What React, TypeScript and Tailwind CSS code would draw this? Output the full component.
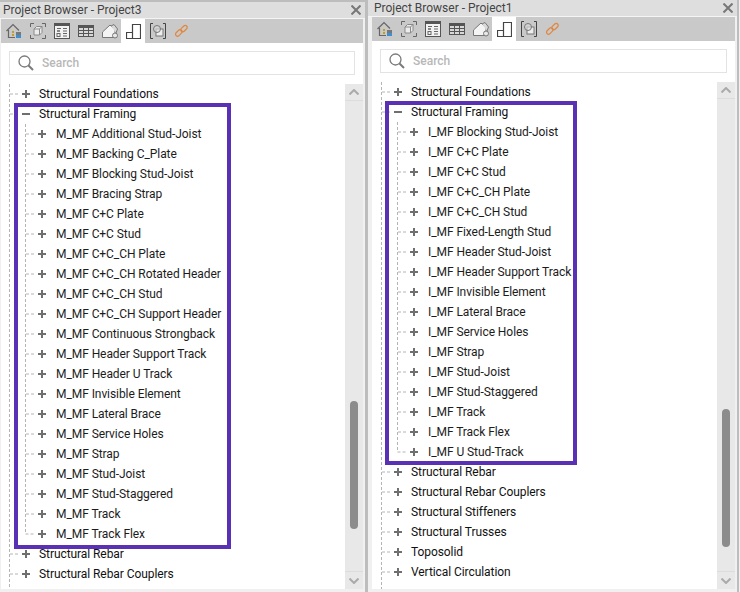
import { ReactNode } from "react";

const font = "font-['Roboto','Noto_Sans',sans-serif]";

const leftKids = [
  "M_MF Additional Stud-Joist", "M_MF Backing C_Plate", "M_MF Blocking Stud-Joist", "M_MF Bracing Strap",
  "M_MF C+C Plate", "M_MF C+C Stud", "M_MF C+C_CH Plate", "M_MF C+C_CH Rotated Header", "M_MF C+C_CH Stud",
  "M_MF C+C_CH Support Header", "M_MF Continuous Strongback", "M_MF Header Support Track", "M_MF Header U Track",
  "M_MF Invisible Element", "M_MF Lateral Brace", "M_MF Service Holes", "M_MF Strap", "M_MF Stud-Joist",
  "M_MF Stud-Staggered", "M_MF Track", "M_MF Track Flex",
];

const rightKids = [
  "I_MF Blocking Stud-Joist", "I_MF C+C Plate", "I_MF C+C Stud", "I_MF C+C_CH Plate", "I_MF C+C_CH Stud",
  "I_MF Fixed-Length Stud", "I_MF Header Stud-Joist", "I_MF Header Support Track", "I_MF Invisible Element",
  "I_MF Lateral Brace", "I_MF Service Holes", "I_MF Strap", "I_MF Stud-Joist", "I_MF Stud-Staggered",
  "I_MF Track", "I_MF Track Flex", "I_MF U Stud-Track",
];

const dash = { stroke: "#b4b4b4", strokeDasharray: "3 2" };

function TopRow({ label, open }: { label: string; open?: boolean }) {
  return (
    <div className="flex h-5 items-center">
      <svg width="38" height="20" className="shrink-0">
        <path d="M8.5 0V20M9 10H17" fill="none" {...dash} />
        <path d="M21 10H29" stroke="#6f6f6f" strokeWidth="2" />
        {!open && <path d="M25 6V14" stroke="#6f6f6f" strokeWidth="2" />}
      </svg>
      <span className="whitespace-nowrap">{label}</span>
    </div>
  );
}

function KidRow({ label, last }: { label: string; last?: boolean }) {
  return (
    <div className="flex h-5 items-center">
      <svg width="55" height="20" className="shrink-0">
        <path d="M8.5 0V20" fill="none" {...dash} />
        <path d={last ? "M24.5 0V10H33" : "M24.5 0V20M25 10H33"} fill="none" {...dash} />
        <path d="M37 10H45M41 6V14" stroke="#6f6f6f" strokeWidth="2" />
      </svg>
      <span className="whitespace-nowrap text-[#1c1c1c]">{label}</span>
    </div>
  );
}

function Scrollbar({ thumb, before }: { thumb: string; before: string }) {
  return (
    <div className="flex w-[18px] shrink-0 flex-col bg-[#e8e8e8]">
      <div className="flex h-[17px] shrink-0 items-center justify-center border-b border-[#dcdcdc]">
        <svg width="10" height="6" viewBox="0 0 10 6"><path d="M0.5 5.5L5 1L9.5 5.5" fill="none" stroke="#aaa" strokeWidth="2" /></svg>
      </div>
      <div className={`${before} shrink-0`} />
      <div className={`${thumb} mx-auto w-2 shrink-0 rounded bg-[#8c8c8c]`} />
      <div className="grow" />
      <div className="flex h-[18px] shrink-0 items-center justify-center border-t border-[#dcdcdc]">
        <svg width="10" height="6" viewBox="0 0 10 6"><path d="M0.5 0.5L5 5L9.5 0.5" fill="none" stroke="#aaa" strokeWidth="2" /></svg>
      </div>
    </div>
  );
}

const icons: ReactNode[] = [
  <svg key="home" width="16" height="16" viewBox="0 0 16 16" fill="none">
    <path d="M0.5 8L7 1.5L13 7.5M2.5 7V14.5H9" stroke="#666" strokeWidth="1.2" />
    <rect x="6" y="8" width="2" height="2" fill="#c79a2b" />
    <rect x="6" y="11" width="2" height="2" fill="#c79a2b" />
    <rect x="10" y="9" width="5" height="3" fill="#777" />
    <rect x="10" y="12" width="5" height="3" fill="#3d8fd1" />
  </svg>,
  <svg key="box" width="16" height="16" viewBox="0 0 16 16" fill="none">
    <path d="M0.5 4V0.5H4M12 0.5H15.5V4M15.5 12V15.5H12M4 15.5H0.5V12" stroke="#666" />
    <path d="M4 6L6.5 3.5H12V9.5L9.5 12H4ZM4 6H9.5V12M9.5 6L12 3.5" fill="#ececec" stroke="#8a8a8a" />
  </svg>,
  <svg key="sheet" width="16" height="16" viewBox="0 0 16 16" fill="none">
    <rect x="0.5" y="0.5" width="15" height="15" fill="#f2f2f2" stroke="#555" />
    <rect x="1" y="1" width="14" height="2" fill="#555" />
    <path d="M3 5.5H7M9 5.5H13M9 8H13M9 10.5H13M9 13H13" stroke="#666" />
    <rect x="3" y="10.5" width="3" height="3" stroke="#666" />
    <rect x="3" y="7" width="3" height="2" fill="#888" />
  </svg>,
  <svg key="table" width="16" height="12" viewBox="0 0 16 12" fill="none">
    <rect x="0.5" y="0.5" width="15" height="11" fill="#d8d8d8" stroke="#555" />
    <rect x="1" y="1" width="14" height="2" fill="#555" />
    <path d="M1 5.5H15M1 8.5H15M5.5 3V11M10.5 3V11" stroke="#555" />
  </svg>,
  <svg key="tag" width="16" height="15" viewBox="0 0 16 15" fill="none">
    <path d="M0.5 13.5V8L8 1L13 6V13.5Z" fill="#f4f4f4" stroke="#777" />
    <path d="M9 2L12 0.5L15.5 5L14 9" fill="#d9d9d9" stroke="#777" />
    <circle cx="13" cy="11.5" r="2.5" fill="#e8e8e8" stroke="#777" />
  </svg>,
  <svg key="plan" width="15" height="15" viewBox="0 0 15 15" fill="none">
    <path d="M0.5 14.5V8.5H6.5V14.5ZM6.5 8.5V0.5H14.5V14.5H6.5" stroke="#444" strokeWidth="1.2" />
  </svg>,
  <svg key="bracket" width="16" height="16" viewBox="0 0 16 16" fill="none">
    <path d="M3 0.5H0.5V15.5H3M13 0.5H15.5V15.5H13" stroke="#444" />
    <rect x="6" y="6" width="7" height="7" fill="#eee" stroke="#777" />
    <circle cx="7" cy="6" r="3.5" fill="#ddd" fillOpacity="0.6" stroke="#777" />
  </svg>,
  <svg key="link" width="15" height="14" viewBox="0 0 15 14" fill="none" stroke="#e0873f" strokeWidth="1.2">
    <rect x="-3.2" y="-2" width="7.5" height="4" rx="2" transform="translate(4.4 9.3) rotate(-45)" />
    <rect x="-4.2" y="-2" width="7.5" height="4" rx="2" transform="translate(10.3 4.3) rotate(-45)" />
  </svg>,
];

function Panel(props: {
  title: string;
  width: string;
  topGap: string;
  titleInset: string;
  inset: string;
  treeInset: string;
  box: string;
  thumb: string;
  before: string;
  kids: string[];
  tail: string[];
}) {
  return (
    <div className={`${props.width} flex shrink-0 flex-col bg-[#f0f0f0]`}>
      <div className={`${props.topGap} shrink-0 bg-[#bdbdbd]`} />
      <div className="flex h-[16px] shrink-0 items-center justify-between bg-[#dedede] text-[12px] text-[#444]">
        <span className={`${props.titleInset} whitespace-nowrap`}>{props.title}</span>
        <svg width="10" height="10" viewBox="0 0 10 10" className="mr-[4px]">
          <path d="M0.5 0.5L9.5 9.5M9.5 0.5L0.5 9.5" stroke="#777" strokeWidth="2" />
        </svg>
      </div>
      <div className="h-px shrink-0 bg-[#f4f4f4]" />
      <div className={`${props.inset} mr-[2px] mb-[3px] flex min-h-0 grow flex-col`}>
        <div className="flex h-[24px] shrink-0 items-stretch bg-[#c9c9c9]">
          {icons.map((icon, i) => (
            <div key={i} className={`flex w-6 items-center justify-center pl-px ${i === 5 ? "bg-white" : ""}`}>
              {icon}
            </div>
          ))}
        </div>
        <div className="flex min-h-0 grow flex-col bg-white">
          <div className="mx-[8px] mt-[8px] flex h-[24px] shrink-0 items-center border border-[#e3e3e3] bg-white pl-[8px]">
            <svg width="16" height="16" viewBox="0 0 16 16" fill="none" stroke="#7a7a7a">
              <circle cx="6.5" cy="6.5" r="5.5" strokeWidth="1.3" />
              <path d="M10.5 10.5L15 15" strokeWidth="2" />
            </svg>
            <span className="ml-[8px] text-[12px] font-medium text-[#b8b8b8]">Search</span>
          </div>
          <div className="mt-[9px] flex min-h-0 grow">
            <div className={`${props.treeInset} relative min-w-0 grow overflow-hidden text-[12px] tracking-[-0.07px] text-[#111]`}>
              <TopRow label="Structural Foundations" />
              <TopRow label="Structural Framing" open />
              {props.kids.map((k, i) => (
                <KidRow key={k} label={k} last={i === props.kids.length - 1} />
              ))}
              {props.tail.map((t) => (
                <TopRow key={t} label={t} />
              ))}
              <svg width="38" height="20" className="block">
                <path d="M8.5 0V20" fill="none" {...dash} />
              </svg>
              <div className={`${props.box} absolute border-4 border-[#5a30b5]`} />
            </div>
            <Scrollbar thumb={props.thumb} before={props.before} />
          </div>
        </div>
      </div>
    </div>
  );
}

export default function App() {
  return (
    <div className={`flex h-[592px] w-[740px] overflow-hidden bg-[#f0f0f0] ${font}`}>
      <Panel
        title="Project Browser - Project3"
        width="w-[365px]"
        topGap="h-[2px]"
        titleInset="pl-[3px]"
        inset="pl-px"
        treeInset=""
        box="left-[13px] top-[19px] h-[446px] w-[217px]"
        thumb="h-[128px]"
        before="h-[300px]"
        kids={leftKids}
        tail={["Structural Rebar", "Structural Rebar Couplers"]}
      />
      <div className="h-full w-[3px] shrink-0 bg-[#bdbdbd]" />
      <Panel
        title="Project Browser - Project1"
        width="w-[369px]"
        topGap="h-0"
        titleInset="pl-[6px]"
        inset="pl-[4px]"
        treeInset="pl-px"
        box="left-[13px] top-[19px] h-[364px] w-[192px]"
        thumb="h-[138px]"
        before="h-[310px]"
        kids={rightKids}
        tail={["Structural Rebar", "Structural Rebar Couplers", "Structural Stiffeners", "Structural Trusses", "Toposolid", "Vertical Circulation"]}
      />
      <div className="h-full w-[2px] shrink-0 bg-[#bdbdbd]" />
    </div>
  );
}
